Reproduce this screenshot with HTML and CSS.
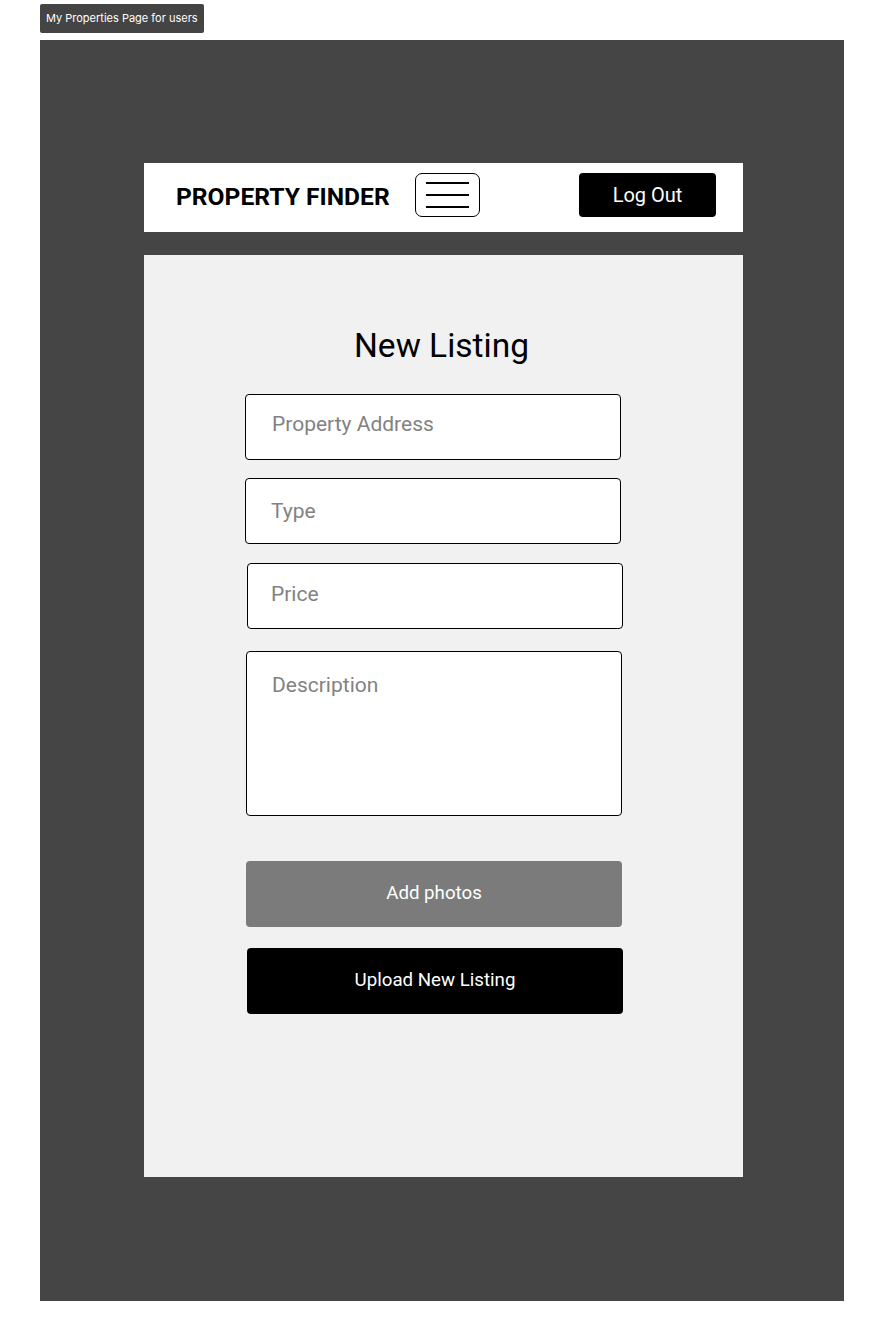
FILE: index.html
```html
<!DOCTYPE html>
<html lang="en">
<head>
  <meta charset="UTF-8">
  <title>New Listing</title>
  <link rel="stylesheet" href="styles.css">
</head>
<body>
  <div class="frame-label">My Properties Page for users</div>

  <div class="frame">
    <header class="topbar">
      <h1 class="brand">PROPERTY FINDER</h1>
      <button class="menu-button" aria-label="Menu">
        <span class="menu-line"></span>
        <span class="menu-line"></span>
        <span class="menu-line"></span>
      </button>
      <button class="logout-button">Log Out</button>
    </header>

    <main class="panel">
      <h2 class="panel-title">New Listing</h2>
      <form class="listing-form">
        <input class="field field-address" placeholder="Property Address">
        <input class="field field-type" placeholder="Type">
        <input class="field field-price" placeholder="Price">
        <textarea class="field field-description" placeholder="Description"></textarea>
        <button type="button" class="photos-button">Add photos</button>
        <button type="button" class="upload-button">Upload New Listing</button>
      </form>
    </main>
  </div>
</body>
</html>
```

FILE: styles.css
```css
* {
  box-sizing: border-box;
  margin: 0;
  padding: 0;
}

body {
  background: white;
  font-family: Roboto, "Liberation Sans", sans-serif;
  padding-left: 40px;
  padding-top: 4px;
}

.frame-label {
  display: inline-block;
  height: 29px;
  padding: 0 6px;
  line-height: 29px;
  background-color: #444444;
  color: white;
  font-family: Inter, "Liberation Sans", sans-serif;
  font-size: 11px;
  border-radius: 2px;
}

.frame {
  width: 804px;
  height: 1261px;
  margin-top: 7px;
  background-color: #454545;
  padding-top: 123px;
  padding-left: 104px;
}

.topbar {
  width: 599px;
  height: 69px;
  background: white;
  display: flex;
  align-items: center;
  padding-left: 32px;
}

.brand {
  font-size: 24.6px;
  font-weight: 700;
  color: black;
  margin-top: -2px;
}

.menu-button {
  width: 65px;
  height: 44px;
  margin-left: 25px;
  margin-top: -5px;
  border: 1px solid black;
  border-radius: 7px;
  background: white;
  display: flex;
  flex-direction: column;
  align-items: center;
  justify-content: center;
  gap: 10.5px;
}

.menu-line {
  display: block;
  width: 43px;
  height: 1.5px;
  background: black;
}

.logout-button {
  margin-left: auto;
  margin-right: 27px;
  margin-top: -6px;
  width: 137px;
  height: 44px;
  background: black;
  color: white;
  border: none;
  border-radius: 4px;
  font-family: Roboto, "Liberation Sans", sans-serif;
  font-size: 20px;
}

.panel {
  width: 599px;
  height: 922px;
  margin-top: 23px;
  background-color: #f1f1f1;
  padding-top: 71px;
}

.panel-title {
  font-size: 33.5px;
  font-weight: 400;
  line-height: 40px;
  text-align: center;
  color: black;
  margin-left: -4px;
}

.listing-form {
  display: flex;
  flex-direction: column;
  align-items: flex-start;
  padding-left: 101px;
  margin-top: 28px;
}

.field {
  width: 376px;
  height: 66px;
  background: white;
  border: 1px solid black;
  border-radius: 4px;
  padding: 0 26px;
  font-family: Roboto, "Liberation Sans", sans-serif;
  font-size: 21px;
  color: black;
  outline: none;
}

.field::placeholder {
  color: #828282;
}

.field-address {
  padding-left: 26px;
  padding-bottom: 6px;
}

.field-type {
  margin-top: 18px;
  padding-left: 25px;
}

.field-price {
  margin-top: 19px;
  margin-left: 2px;
  padding-left: 23px;
  padding-bottom: 4px;
}

.field-description {
  margin-top: 22px;
  margin-left: 1px;
  height: 165px;
  padding-top: 21px;
  padding-left: 25px;
  resize: none;
}

.photos-button,
.upload-button {
  width: 376px;
  height: 66px;
  border: none;
  border-radius: 4px;
  color: white;
  font-family: Roboto, "Liberation Sans", sans-serif;
  font-size: 18.7px;
}

.photos-button {
  margin-top: 45px;
  margin-left: 1px;
  background-color: #7b7b7b;
  padding-bottom: 2px;
}

.upload-button {
  margin-top: 21px;
  margin-left: 2px;
  background: black;
  padding-bottom: 2px;
}
```
